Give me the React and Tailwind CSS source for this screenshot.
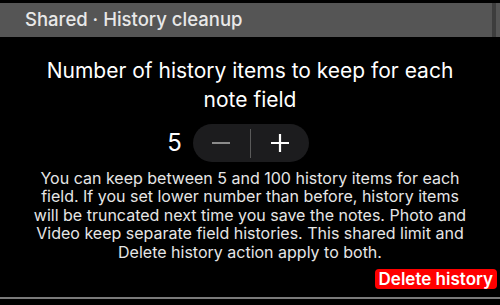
import React, { useState } from "react";

export default function App() {
  const [count, setCount] = useState(5);

  return (
    <div
      className="w-[500px] h-[305px] bg-black overflow-hidden flex flex-col"
      style={{ fontFamily: "Inter, 'Noto Sans', sans-serif" }}
    >
      {/* header bar */}
      <div className="mt-[3px] h-[34px] flex bg-[#555555]">
        <div className="flex-1 flex items-center pl-[25px] text-[18.5px] font-medium text-[#e8e8e8]">
          Shared · History cleanup
        </div>
        <div className="w-[4px] bg-[#3d3d3d]" />
        <div className="w-[4px]" />
      </div>

      <div className="flex flex-col items-center text-white">
        <h2 className="mt-[19px] text-center text-[21px] leading-[29px] font-normal">
          Number of history items to keep for each
          <br />
          note field
        </h2>

        {/* stepper */}
        <div className="mt-[10px] flex items-center gap-[10px] pr-[25px]">
          <span className="text-[24px] leading-none w-[16px] text-center">{count}</span>
          <div className="w-[116px] h-[38px] rounded-full bg-[#1c1c1e] flex items-center">
            <button
              onClick={() => setCount((c) => Math.max(5, c - 1))}
              className="flex-1 h-full flex items-center justify-center"
            >
              <svg width="20" height="20" viewBox="0 0 20 20">
                <path d="M1 10h18" stroke="#8a8a8a" strokeWidth="2" />
              </svg>
            </button>
            <div className="w-[1.5px] h-[29px] bg-[#5a5a5a]" />
            <button
              onClick={() => setCount((c) => Math.min(100, c + 1))}
              className="flex-1 h-full flex items-center justify-center"
            >
              <svg width="20" height="20" viewBox="0 0 20 20">
                <path d="M1 10h18M10 1v18" stroke="#ffffff" strokeWidth="2.2" />
              </svg>
            </button>
          </div>
        </div>

        <p className="mt-[7px] text-center text-[16px] leading-[18.4px] text-[#e6e6e6] whitespace-nowrap">
          You can keep between 5 and 100 history items for each
          <br />
          field. If you set lower number than before, history items
          <br />
          will be truncated next time you save the notes. Photo and
          <br />
          Video keep separate field histories. This shared limit and
          <br />
          Delete history action apply to both.
        </p>
      </div>

      <div className="flex justify-end pr-[3px] mt-[8px]">
        <button className="h-[20px] px-[4px] rounded-[4px] bg-[#ff0000] text-white text-[17px] font-semibold leading-none flex items-center">
          Delete history
        </button>
      </div>

      <div className="mt-[8px] h-[2px] bg-[#7a7a7a]" />
    </div>
  );
}
